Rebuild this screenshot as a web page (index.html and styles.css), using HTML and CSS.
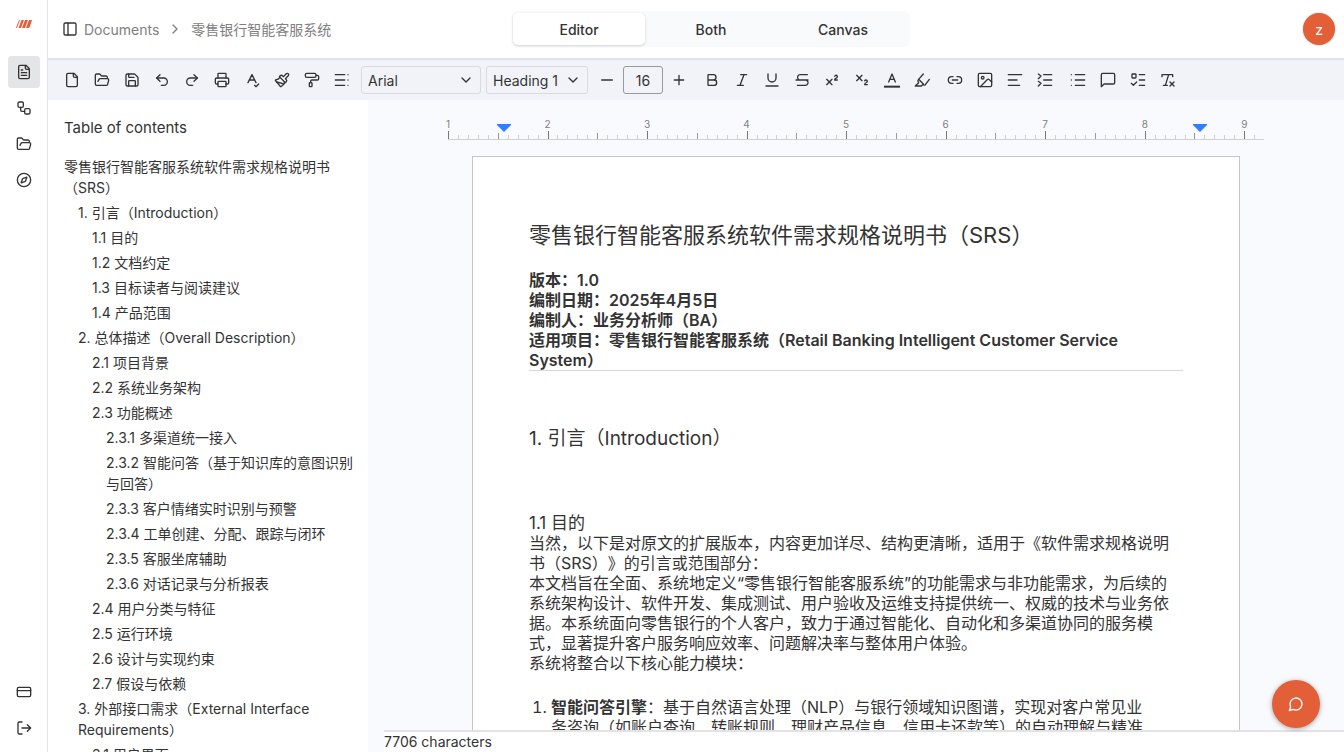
FILE: index.html
```
<!DOCTYPE html>
<html lang="zh-CN">
<head>
    <meta charset="UTF-8">
    <meta name="viewport" content="width=device-width, initial-scale=1.0">
    <title>零售银行智能客服系统</title>
    <link rel="stylesheet" href="styles.css">
</head>
<body>
    <!-- Icon sprite -->
    <svg class="sprite" aria-hidden="true">
        <symbol id="file-text" viewBox="0 0 24 24"><path d="M15 2H6a2 2 0 0 0-2 2v16a2 2 0 0 0 2 2h12a2 2 0 0 0 2-2V7Z"/><path d="M14 2v4a2 2 0 0 0 2 2h4M10 9H8M16 13H8M16 17H8"/></symbol>
        <symbol id="workflow" viewBox="0 0 24 24"><rect width="8" height="8" x="3" y="3" rx="2"/><path d="M7 11v4a2 2 0 0 0 2 2h4"/><rect width="8" height="8" x="13" y="13" rx="2"/></symbol>
        <symbol id="folder-open" viewBox="0 0 24 24"><path d="m6 14 1.5-2.9A2 2 0 0 1 9.24 10H20a2 2 0 0 1 1.94 2.5l-1.54 6a2 2 0 0 1-1.95 1.5H4a2 2 0 0 1-2-2V5a2 2 0 0 1 2-2h3.9a2 2 0 0 1 1.69.9l.81 1.2a2 2 0 0 0 1.67.9H18a2 2 0 0 1 2 2v2"/></symbol>
        <symbol id="compass" viewBox="0 0 24 24"><circle cx="12" cy="12" r="10"/><path d="m16.24 7.76-1.804 5.411a2 2 0 0 1-1.265 1.265L7.76 16.24l1.804-5.411a2 2 0 0 1 1.265-1.265z"/></symbol>
        <symbol id="card" viewBox="0 0 24 24"><rect width="20" height="14" x="2" y="5" rx="2"/><path d="M2 10h20"/></symbol>
        <symbol id="log-out" viewBox="0 0 24 24"><path d="M9 3H5a2 2 0 0 0-2 2v14a2 2 0 0 0 2 2h4M17 17l5-5-5-5M22 12H9"/></symbol>
        <symbol id="panel-left" viewBox="0 0 24 24"><rect width="18" height="18" x="3" y="3" rx="2"/><path d="M9 3v18"/></symbol>
        <symbol id="chevron-right" viewBox="0 0 24 24"><path d="m9 18 6-6-6-6"/></symbol>
        <symbol id="chevron-down" viewBox="0 0 24 24"><path d="m6 9 6 6 6-6"/></symbol>
        <symbol id="file" viewBox="0 0 24 24"><path d="M15 2H6a2 2 0 0 0-2 2v16a2 2 0 0 0 2 2h12a2 2 0 0 0 2-2V7Z"/><path d="M14 2v4a2 2 0 0 0 2 2h4"/></symbol>
        <symbol id="save" viewBox="0 0 24 24"><path d="M15.2 3a2 2 0 0 1 1.4.6l3.8 3.8a2 2 0 0 1 .6 1.4V19a2 2 0 0 1-2 2H5a2 2 0 0 1-2-2V5a2 2 0 0 1 2-2z"/><path d="M17 21v-7a1 1 0 0 0-1-1H8a1 1 0 0 0-1 1v7M7 3v4a1 1 0 0 0 1 1h7"/></symbol>
        <symbol id="undo" viewBox="0 0 24 24"><path d="M9 14 4 9l5-5"/><path d="M4 9h10.5a5.5 5.5 0 0 1 0 11H11"/></symbol>
        <symbol id="redo" viewBox="0 0 24 24"><path d="m15 14 5-5-5-5"/><path d="M20 9H9.500a5.500 5.500 0 0 0 0 11H13"/></symbol>
        <symbol id="printer" viewBox="0 0 24 24"><path d="M6 18H4a2 2 0 0 1-2-2v-5a2 2 0 0 1 2-2h16a2 2 0 0 1 2 2v5a2 2 0 0 1-2 2h-2"/><path d="M6 9V3a1 1 0 0 1 1-1h10a1 1 0 0 1 1 1v6"/><rect x="6" y="14" width="12" height="8" rx="1"/></symbol>
        <symbol id="spell-check" viewBox="0 0 24 24"><path d="m6 16 6-12 6 12M8 12h8M16 20l2 2 4-4"/></symbol>
        <symbol id="brush" viewBox="0 0 24 24"><path d="m14.622 17.897-10.68-2.913"/><path d="M18.376 2.622a1 1 0 1 1 3.002 3.002L17.360 9.643a.5.5 0 0 0 0 .707l.944.944a2.410 2.410 0 0 1 0 3.408l-.944.944a.5.5 0 0 1-.707 0L8.354 7.348a.5.5 0 0 1 0-.707l.944-.944a2.410 2.410 0 0 1 3.408 0l.944.944a.5.5 0 0 0 .707 0z"/><path d="M9 8c-1.804 2.710-3.970 3.460-6.583 3.948a.507.507 0 0 0-.302.819l7.320 8.883a1 1 0 0 0 1.185.204C12.735 20.405 16 16.792 16 15"/></symbol>
        <symbol id="roller" viewBox="0 0 24 24"><rect width="16" height="6" x="2" y="2" rx="2"/><path d="M10 16v-2a2 2 0 0 1 2-2h8a2 2 0 0 0 2-2V7a2 2 0 0 0-2-2h-2"/><rect width="4" height="6" x="8" y="16" rx="1"/></symbol>
        <symbol id="toc" viewBox="0 0 24 24"><path d="M2 4h14M2 12h14M2 20h14M21 4h.01M21 12h.01M21 20h.01"/></symbol>
        <symbol id="minus" viewBox="0 0 24 24"><path d="M4 12h16"/></symbol>
        <symbol id="plus" viewBox="0 0 24 24"><path d="M5 12h14M12 5v14"/></symbol>
        <symbol id="bold" viewBox="0 0 24 24"><path d="M6 12h9a4 4 0 0 1 0 8H7a1 1 0 0 1-1-1V5a1 1 0 0 1 1-1h7a4 4 0 0 1 0 8"/></symbol>
        <symbol id="italic" viewBox="0 0 24 24"><path d="M19 4h-9M14 20H5M15 4 9 20"/></symbol>
        <symbol id="underline" viewBox="0 0 24 24"><path d="M6 3v6a6 6 0 0 0 12 0V3M3 21h18"/></symbol>
        <symbol id="strike" viewBox="0 0 24 24"><path d="M20 4H9.500a4 4 0 0 0-2.830 7M3 12h18M17.500 12a4 4 0 0 1-1 8H5"/></symbol>
        <symbol id="superscript" viewBox="0 0 24 24"><path d="m4 19 8-8M12 19l-8-8M20 12h-4c0-1.500.442-2 1.500-2.500S20 8.334 20 7.002c0-.472-.170-.930-.484-1.290a2.105 2.105 0 0 0-2.617-.436c-.420.239-.738.614-.899 1.060"/></symbol>
        <symbol id="subscript" viewBox="0 0 24 24"><path d="m4 5 8 8M12 5l-8 8M20 19h-4c0-1.500.440-2 1.500-2.500S20 15.330 20 14c0-.470-.170-.930-.480-1.290a2.110 2.110 0 0 0-2.620-.440c-.420.240-.740.620-.900 1.070"/></symbol>
        <symbol id="text-color" viewBox="0 0 24 24"><path d="m7 15 5-12 5 12M8.500 11h7"/><path class="swatch" d="M0 22h24"/></symbol>
        <symbol id="highlighter" viewBox="0 0 24 24"><path d="m14 3-7.500 8.500a2 2 0 0 0-.500 2L7 16l-5 5h9l2-2 2 .500a2 2 0 0 0 2-.500L23 11M7 11l7 7"/></symbol>
        <symbol id="link" viewBox="0 0 24 24"><path d="M9 17H7A5 5 0 0 1 7 7h2M15 7h2a5 5 0 1 1 0 10h-2M8 12h8"/></symbol>
        <symbol id="image" viewBox="0 0 24 24"><rect width="20" height="20" x="2" y="2" rx="2"/><circle cx="8.500" cy="8.500" r="2"/><path d="m22 15-3.600-3.600a2 2 0 0 0-2.800 0L5 22"/></symbol>
        <symbol id="align-left" viewBox="0 0 24 24"><path d="M2 4h20M2 12h13M2 20h17"/></symbol>
        <symbol id="list-ordered" viewBox="0 0 24 24"><path d="M10 4h12M10 12h12M10 20h12M2 3l4 3-4 4M2 14l4 3-4 4"/></symbol>
        <symbol id="list" viewBox="0 0 24 24"><path d="M8 4h14M8 12h14M8 20h14M2 4h.01M2 12h.01M2 20h.01"/></symbol>
        <symbol id="comment" viewBox="0 0 24 24"><path d="M22 16a2 2 0 0 1-2 2H6l-4 4V4a2 2 0 0 1 2-2h16a2 2 0 0 1 2 2z"/></symbol>
        <symbol id="list-todo" viewBox="0 0 24 24"><rect x="3" y="3" width="6" height="6" rx="1"/><path d="m2 17 3 3 5-5M14 4h8M14 12h8M14 20h8"/></symbol>
        <symbol id="clear-format" viewBox="0 0 24 24"><path d="M3 7V4h16v3M5 20h6M13 4 8 20M15 15l6 6M21 15l-6 6"/></symbol>
        <symbol id="message" viewBox="0 0 24 24"><path d="M7.900 20A9 9 0 1 0 4 16.100L2 22Z"/></symbol>
    </svg>

    <div class="app">
        <nav class="rail">
            <a class="logo" href="#" aria-label="Home">
                <svg viewBox="0 0 16 8"><path d="M3 0h1L1 8H0zM5.500 0H8L5 8H2.500zM9 0h3l-3 8H6zM13 0h3l-2 6.500q-.500 1.500-2 1.500h-2z"/></svg>
            </a>
            <a class="rail-link active" href="#" aria-label="Documents"><svg class="icon"><use href="#file-text"/></svg></a>
            <a class="rail-link" href="#" aria-label="Workflows"><svg class="icon"><use href="#workflow"/></svg></a>
            <a class="rail-link" href="#" aria-label="Files"><svg class="icon"><use href="#folder-open"/></svg></a>
            <a class="rail-link" href="#" aria-label="Explore"><svg class="icon"><use href="#compass"/></svg></a>
            <a class="rail-link rail-bottom" href="#" aria-label="Billing"><svg class="icon"><use href="#card"/></svg></a>
            <a class="rail-link" href="#" aria-label="Log out"><svg class="icon"><use href="#log-out"/></svg></a>
        </nav>

        <div class="main">
            <header class="header">
                <div class="breadcrumb">
                    <button class="panel-btn" aria-label="Toggle panel"><svg class="icon"><use href="#panel-left"/></svg></button>
                    <a href="#">Documents</a>
                    <svg class="icon crumb-sep"><use href="#chevron-right"/></svg>
                    <span>零售银行智能客服系统</span>
                </div>
                <div class="tabs">
                    <button class="tab selected">Editor</button>
                    <button class="tab">Both</button>
                    <button class="tab">Canvas</button>
                </div>
                <button class="avatar">z</button>
            </header>

            <div class="toolbar">
                <div class="tool-group">
                    <button class="tool" aria-label="New"><svg class="icon"><use href="#file"/></svg></button>
                    <button class="tool" aria-label="Open"><svg class="icon"><use href="#folder-open"/></svg></button>
                    <button class="tool" aria-label="Save"><svg class="icon"><use href="#save"/></svg></button>
                    <button class="tool" aria-label="Undo"><svg class="icon"><use href="#undo"/></svg></button>
                    <button class="tool" aria-label="Redo"><svg class="icon"><use href="#redo"/></svg></button>
                    <button class="tool" aria-label="Print"><svg class="icon"><use href="#printer"/></svg></button>
                    <button class="tool" aria-label="Spelling"><svg class="icon"><use href="#spell-check"/></svg></button>
                    <button class="tool" aria-label="Clean up"><svg class="icon"><use href="#brush"/></svg></button>
                    <button class="tool" aria-label="Format painter"><svg class="icon"><use href="#roller"/></svg></button>
                    <button class="tool" aria-label="Table of contents"><svg class="icon"><use href="#toc"/></svg></button>
                </div>
                <div class="select-wrap font-select">
                    <select aria-label="Font"><option>Arial</option></select>
                    <svg class="icon"><use href="#chevron-down"/></svg>
                </div>
                <div class="select-wrap style-select">
                    <select aria-label="Style"><option>Heading 1</option></select>
                    <svg class="icon"><use href="#chevron-down"/></svg>
                </div>
                <div class="tool-group">
                    <button class="tool" aria-label="Smaller"><svg class="icon"><use href="#minus"/></svg></button>
                    <input class="size-input" type="text" value="16" aria-label="Font size">
                    <button class="tool" aria-label="Larger"><svg class="icon"><use href="#plus"/></svg></button>
                </div>
                <div class="tool-group">
                    <button class="tool" aria-label="Bold"><svg class="icon"><use href="#bold"/></svg></button>
                    <button class="tool" aria-label="Italic"><svg class="icon"><use href="#italic"/></svg></button>
                    <button class="tool" aria-label="Underline"><svg class="icon"><use href="#underline"/></svg></button>
                    <button class="tool" aria-label="Strikethrough"><svg class="icon"><use href="#strike"/></svg></button>
                    <button class="tool" aria-label="Superscript"><svg class="icon"><use href="#superscript"/></svg></button>
                    <button class="tool" aria-label="Subscript"><svg class="icon"><use href="#subscript"/></svg></button>
                    <button class="tool" aria-label="Text color"><svg class="icon"><use href="#text-color"/></svg></button>
                    <button class="tool" aria-label="Highlight"><svg class="icon"><use href="#highlighter"/></svg></button>
                </div>
                <div class="tool-group">
                    <button class="tool" aria-label="Link"><svg class="icon"><use href="#link"/></svg></button>
                    <button class="tool" aria-label="Image"><svg class="icon"><use href="#image"/></svg></button>
                    <button class="tool" aria-label="Align"><svg class="icon"><use href="#align-left"/></svg></button>
                    <button class="tool" aria-label="Numbered list"><svg class="icon"><use href="#list-ordered"/></svg></button>
                </div>
                <div class="tool-group">
                    <button class="tool" aria-label="Bullet list"><svg class="icon"><use href="#list"/></svg></button>
                    <button class="tool" aria-label="Comment"><svg class="icon"><use href="#comment"/></svg></button>
                    <button class="tool" aria-label="Checklist"><svg class="icon"><use href="#list-todo"/></svg></button>
                    <button class="tool" aria-label="Clear formatting"><svg class="icon"><use href="#clear-format"/></svg></button>
                </div>
            </div>

            <div class="workspace">
                <aside class="contents">
                    <h2>Table of contents</h2>
                    <a href="#">零售银行智能客服系统软件需求规格说明书（SRS）</a>
                    <a class="level-1" href="#">1. 引言（Introduction）</a>
                    <a class="level-2" href="#">1.1 目的</a>
                    <a class="level-2" href="#">1.2 文档约定</a>
                    <a class="level-2" href="#">1.3 目标读者与阅读建议</a>
                    <a class="level-2" href="#">1.4 产品范围</a>
                    <a class="level-1" href="#">2. 总体描述（Overall Description）</a>
                    <a class="level-2" href="#">2.1 项目背景</a>
                    <a class="level-2" href="#">2.2 系统业务架构</a>
                    <a class="level-2" href="#">2.3 功能概述</a>
                    <a class="level-3" href="#">2.3.1 多渠道统一接入</a>
                    <a class="level-3" href="#">2.3.2 智能问答（基于知识库的意图识别与回答）</a>
                    <a class="level-3" href="#">2.3.3 客户情绪实时识别与预警</a>
                    <a class="level-3" href="#">2.3.4 工单创建、分配、跟踪与闭环</a>
                    <a class="level-3" href="#">2.3.5 客服坐席辅助</a>
                    <a class="level-3" href="#">2.3.6 对话记录与分析报表</a>
                    <a class="level-2" href="#">2.4 用户分类与特征</a>
                    <a class="level-2" href="#">2.5 运行环境</a>
                    <a class="level-2" href="#">2.6 设计与实现约束</a>
                    <a class="level-2" href="#">2.7 假设与依赖</a>
                    <a class="level-1" href="#">3. 外部接口需求（External Interface Requirements）</a>
                    <a class="level-2" href="#">3.1 用户界面</a>
                </aside>

                <main class="editor">
                    <div class="canvas">
                        <div class="ruler" id="ruler">
                            <svg class="marker marker-left" viewBox="0 0 14 8"><path d="M0 0h14v1L7 8 0 1z"/></svg>
                            <svg class="marker marker-right" viewBox="0 0 14 8"><path d="M0 0h14v1L7 8 0 1z"/></svg>
                        </div>
                        <article class="page">
                            <h1>零售银行智能客服系统软件需求规格说明书（SRS）</h1>
                            <p class="meta">版本：1.0<br>编制日期：2025年4月5日<br>编制人：业务分析师（BA）<br>适用项目：零售银行智能客服系统（Retail Banking Intelligent Customer Service System）</p>
                            <h2>1. 引言（Introduction）</h2>
                            <h3>1.1 目的</h3>
                            <p>当然，以下是对原文的扩展版本，内容更加详尽、结构更清晰，适用于《软件需求规格说明书（SRS）》的引言或范围部分：</p>
                            <p>本文档旨在全面、系统地定义“零售银行智能客服系统”的功能需求与非功能需求，为后续的系统架构设计、软件开发、集成测试、用户验收及运维支持提供统一、权威的技术与业务依据。本系统面向零售银行的个人客户，致力于通过智能化、自动化和多渠道协同的服务模式，显著提升客户服务响应效率、问题解决率与整体用户体验。</p>
                            <p>系统将整合以下核心能力模块：</p>
                            <ol>
                                <li><strong>智能问答引擎</strong>：基于自然语言处理（NLP）与银行领域知识图谱，实现对客户常见业务咨询（如账户查询、转账规则、理财产品信息、信用卡还款等）的自动理解与精准</li>
                            </ol>
                        </article>
                    </div>
                    <footer class="status">7706 characters</footer>
                </main>
            </div>
        </div>
    </div>

    <button class="chat-btn" aria-label="Chat"><svg class="icon"><use href="#message"/></svg></button>

    <script src="script.js"></script>
</body>
</html>
```
FILE: styles.css
```
* {
    box-sizing: border-box;
}

body {
    margin: 0;
    font-family: Inter, "Noto Sans CJK SC", sans-serif;
    font-size: 14px;
    color: #333;
    background-color: #fff;
    text-spacing-trim: space-all;
}

button,
select,
input {
    font: inherit;
    color: inherit;
}

button {
    padding: 0;
    border: none;
    background: none;
    cursor: pointer;
}

a {
    color: inherit;
    text-decoration: none;
}

h1, h2, h3, p, ol {
    margin: 0;
    padding: 0;
    font-weight: 400;
}

.sprite {
    display: none;
}

.icon {
    display: block;
    width: 16px;
    height: 16px;
    fill: none;
    stroke: currentColor;
    stroke-width: 2;
    stroke-linecap: round;
    stroke-linejoin: round;
}

.swatch {
    stroke-width: 3;
    stroke-linecap: butt;
}

.app {
    display: flex;
    height: 100vh;
    overflow: hidden;
}

/* Left icon rail */
.rail {
    flex: none;
    width: 48px;
    padding: 16px 0 8px 8px;
    border-right: 1px solid #e2e2e9;
    display: flex;
    flex-direction: column;
    gap: 4px;
}

.logo {
    width: 32px;
    height: 16px;
    margin-bottom: 20px;
    display: flex;
    align-items: center;
    justify-content: center;
}

.logo svg {
    width: 16px;
    height: 8px;
    fill: #e46038;
}

.rail-link {
    width: 32px;
    height: 32px;
    border-radius: 4px;
    display: flex;
    align-items: center;
    justify-content: center;
}

.rail-link.active {
    background-color: #e4e5e7;
}

.rail-bottom {
    margin-top: auto;
}

.main {
    flex: 1;
    min-width: 0;
    display: flex;
    flex-direction: column;
}

/* Header */
.header {
    flex: none;
    height: 60px;
    padding: 0 9px 0 14px;
    border-bottom: 2px solid #e2e2e7;
    display: grid;
    grid-template-columns: 18fr 398px 17fr;
    align-items: center;
}

.breadcrumb {
    display: flex;
    align-items: center;
    gap: 6px;
    color: #808080;
}

.panel-btn {
    color: #333;
}

.crumb-sep {
    margin: 0 2px;
}

.tabs {
    height: 36px;
    padding: 2px 1px;
    border-radius: 6px;
    background-color: #f9fafc;
    display: flex;
}

.tab {
    flex: 1;
    border-radius: 5px;
    font-weight: 500;
}

.tab.selected {
    background-color: #fff;
    box-shadow: 0 1px 3px rgba(0, 0, 0, 0.16);
}

.avatar {
    justify-self: end;
    width: 32px;
    height: 32px;
    border-radius: 50%;
    background-color: #e25f38;
    color: #fff;
    box-shadow: 0 0 2px rgba(0, 0, 0, 0.3);
}

/* Toolbar */
.toolbar {
    flex: none;
    height: 40px;
    padding: 0 10px;
    background-color: #f2f3f9;
    display: flex;
    align-items: center;
    gap: 5px;
}

.tool-group {
    display: flex;
    gap: 2px;
}

.tool {
    width: 28px;
    height: 28px;
    border-radius: 4px;
    display: flex;
    align-items: center;
    justify-content: center;
}

.tool:hover {
    background-color: #e4e5e7;
}

.select-wrap {
    position: relative;
}

.select-wrap select {
    appearance: none;
    width: 100%;
    height: 28px;
    padding: 0 6px;
    border: 1px solid #d9dadd;
    border-radius: 3px;
    background: none;
}

.select-wrap .icon {
    position: absolute;
    top: 6px;
    right: 7px;
    pointer-events: none;
}

.font-select {
    width: 120px;
}

.style-select {
    width: 102px;
}

.size-input {
    width: 40px;
    height: 28px;
    padding: 0;
    border: 1px solid #999;
    border-radius: 3px;
    background: none;
    text-align: center;
}

.workspace {
    flex: 1;
    min-height: 0;
    display: flex;
}

/* Table of contents */
.contents {
    flex: none;
    width: 320px;
    padding: 18px 14px 0 16px;
    overflow: hidden;
}

.contents h2 {
    margin-bottom: 18px;
    font-size: 15px;
    line-height: 20px;
}

.contents a {
    display: block;
    margin-bottom: 4px;
    line-height: 21px;
}

.contents .level-1 {
    padding-left: 14px;
}

.contents .level-2 {
    padding-left: 28px;
}

.contents .level-3 {
    padding-left: 42px;
}

/* Editor */
.editor {
    flex: 1;
    min-width: 0;
    display: flex;
    flex-direction: column;
    background-color: #f9fafd;
}

.canvas {
    flex: 1;
    min-height: 0;
    overflow: hidden;
}

.ruler {
    position: relative;
    max-width: 816px;
    height: 40px;
    margin: 0 auto 16px;
    border-bottom: 1px solid #d0d1d4;
    display: flex;
    align-items: flex-end;
}

.tick {
    position: relative;
    flex: 1;
    height: 4px;
    border-left: 1px solid #d0d1d4;
}

.tick.half {
    height: 6px;
    border-color: #999;
}

.tick.whole {
    height: 8px;
    border-color: #777;
}

.tick span {
    position: absolute;
    bottom: 9px;
    left: -11px;
    width: 20px;
    text-align: center;
    font-size: 10px;
    line-height: 12px;
    color: #808080;
}

.marker {
    position: absolute;
    top: 24px;
    width: 14px;
    height: 8px;
    fill: #2f80ff;
    z-index: 1;
}

.marker-left {
    left: 49px;
}

.marker-right {
    right: 57px;
}

.page {
    max-width: 768px;
    min-height: 1000px;
    margin: 0 auto;
    padding: 64px 56px;
    border: 1px solid #c4c5c9;
    background-color: #fff;
    font-size: 16px;
    line-height: 20px;
}

.page h1 {
    margin-bottom: 21px;
    font-size: 22px;
    line-height: 28px;
}

.page h2 {
    margin: 56px 0 62px;
    font-size: 19px;
    line-height: 24px;
}

.page h3 {
    font-size: 17px;
    line-height: 20px;
}

.page .meta {
    border-bottom: 1px solid #d8d8d8;
    font-weight: 600;
}

.page ol {
    margin-top: 24px;
    padding: 0 30px 0 22px;
}

.page strong {
    font-weight: 600;
}

.status {
    flex: none;
    margin-left: 16px;
    border-top: 2px solid #e2e2e7;
    background-color: #fff;
    line-height: 20px;
}

/* Chat button */
.chat-btn {
    position: fixed;
    right: 24px;
    bottom: 24px;
    width: 48px;
    height: 48px;
    border-radius: 50%;
    background-color: #e25f38;
    color: #fff;
    box-shadow: 0 1px 5px rgba(0, 0, 0, 0.35);
    display: flex;
    align-items: center;
    justify-content: center;
}
```
FILE: script.js
```
const ruler = document.getElementById("ruler");

// ten ticks for each unit, the numbering starts at 1
for (let i = 0; i < 82; i++) {
    const tick = document.createElement("div");
    tick.className = "tick";
    if (i % 10 === 0) {
        tick.classList.add("whole");
        const label = document.createElement("span");
        label.textContent = i / 10 + 1;
        tick.appendChild(label);
    } else if (i % 5 === 0) {
        tick.classList.add("half");
    }
    ruler.appendChild(tick);
}
```
